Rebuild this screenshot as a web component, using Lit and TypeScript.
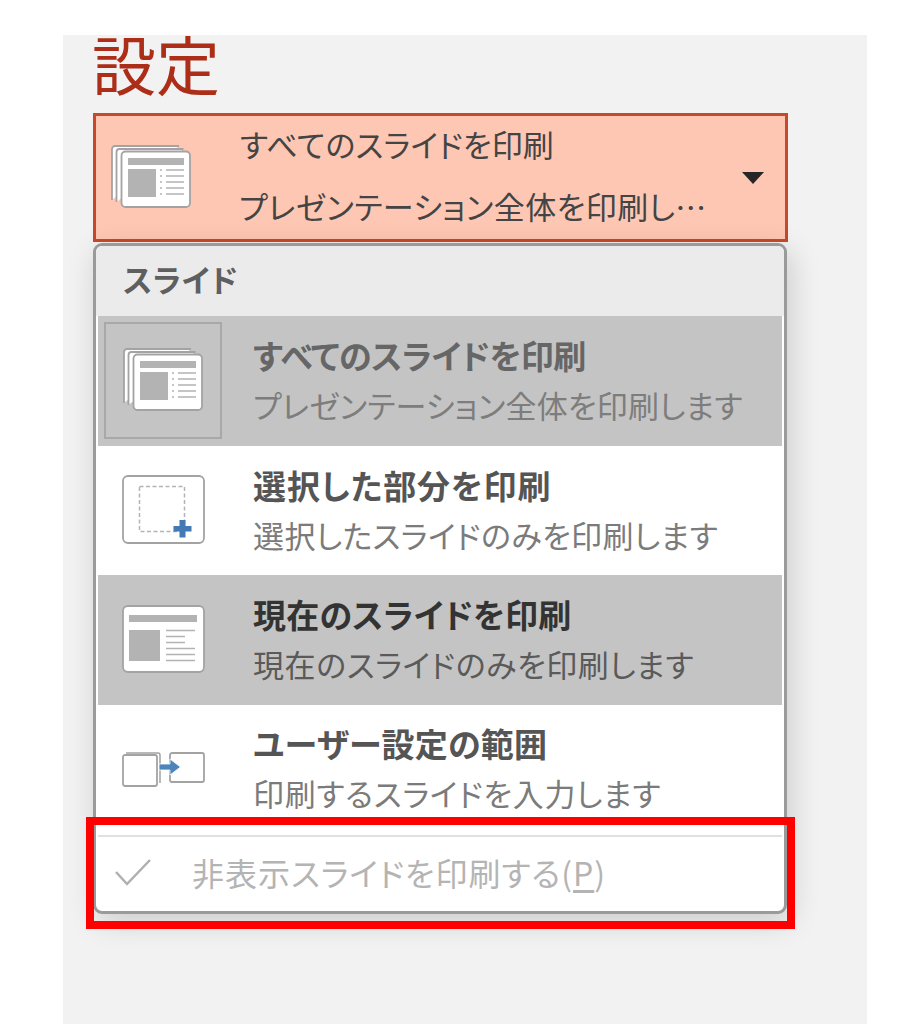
import { LitElement, html, css } from "lit";
import { customElement } from "lit/decorators.js";

const stackIcon = html`<svg class="ic stack" width="80" height="64" viewBox="0 0 80 64">
  <path d="M1 56V5a3 3 0 0 1 3-3h64" fill="#fff" stroke="#a3a3a3" stroke-width="1.800"/>
  <path d="M5.500 58V8a3 3 0 0 1 3-3h64" fill="#fff" stroke="#a3a3a3" stroke-width="1.800"/>
  <rect x="10.500" y="7.500" width="68.500" height="55.500" rx="4" fill="#fff" stroke="#a3a3a3" stroke-width="1.800"/>
  <rect x="17" y="14" width="56" height="7" fill="#b3b3b3"/>
  <rect x="17" y="25" width="28" height="28" fill="#b3b3b3"/>
  <g stroke="#b3b3b3" stroke-width="1.500">
    <path d="M49 26h2M49 32h2M49 38h2M49 44h2M49 50h2"/>
    <path d="M55 26h18M55 32h18M55 38h18M55 44h18M55 50h18"/>
  </g>
</svg>`;

const selectionIcon = html`<svg class="ic" width="84" height="70" viewBox="0 0 84 70">
  <rect x="1" y="1" width="81" height="67" rx="5" fill="#fff" stroke="#a3a3a3" stroke-width="1.800"/>
  <rect x="17.500" y="11.500" width="45" height="45" fill="none" stroke="#b3b3b3" stroke-width="1.500" stroke-dasharray="4 2.500"/>
  <path d="M57.500 45h6v6h6v5.500h-6v6h-6v-6h-6v-5.500h6z" fill="#4379b4"/>
</svg>`;

const slideIcon = html`<svg class="ic" width="84" height="70" viewBox="0 0 84 70">
  <rect x="1" y="1" width="81" height="66" rx="5" fill="#fff" stroke="#a3a3a3" stroke-width="1.800"/>
  <rect x="7" y="10" width="68" height="7" fill="#b3b3b3"/>
  <rect x="7" y="25" width="31" height="31" fill="#b3b3b3"/>
  <path d="M44 25.500h29M44 31.500h19M44 37.500h19M44 43.500h29M44 49.500h29M44 55.500h29" stroke="#b3b3b3" stroke-width="1.500"/>
</svg>`;

const rangeIcon = html`<svg class="ic range" width="84" height="36" viewBox="0 0 84 36">
  <path d="M4 1h32a2 2 0 0 1 2 2v28" fill="none" stroke="#a3a3a3" stroke-width="1.500"/>
  <rect x="1" y="3" width="34" height="31" rx="2" fill="#fff" stroke="#a3a3a3" stroke-width="1.800"/>
  <rect x="48" y="1" width="34" height="29" rx="2" fill="#fff" stroke="#a3a3a3" stroke-width="1.800"/>
  <path d="M37 12h11v-5l10.500 8-10.500 8v-5h-11z" fill="#4d84bb" stroke="#fff" stroke-width="0.800"/>
</svg>`;

const rows = [
  { icon: stackIcon, title: "すべてのスライドを印刷", sub: "プレゼンテーション全体を印刷します", cls: "on dim boxed", tls: -0.4, sls: 0.2 },
  { icon: selectionIcon, title: "選択した部分を印刷", sub: "選択したスライドのみを印刷します", cls: "mid", tls: 0.9, sls: 0.45 },
  { icon: slideIcon, title: "現在のスライドを印刷", sub: "現在のスライドのみを印刷します", cls: "on", tls: 0.25, sls: 0.6 },
  { icon: rangeIcon, title: "ユーザー設定の範囲", sub: "印刷するスライドを入力します", cls: "mid last", tls: 0.2, sls: 0.75 },
];

@customElement("app-root")
export class AppRoot extends LitElement {
  static styles = css`
    :host {
      display: block;
      height: 1024px;
      position: relative;
      overflow: hidden;
      background: #fff;
      font-family: "Noto Sans CJK JP", "Noto Sans", sans-serif;
      font-feature-settings: "palt";
    }
    .panel {
      box-sizing: border-box;
      width: 804px;
      height: 989px;
      margin: 35px 0 0 63px;
      padding-left: 30px;
      background: #f2f2f2;
    }
    h1 {
      margin: 0 0 0 -1px;
      height: 78px;
      font-size: 64px;
      line-height: 55px;
      font-weight: 400;
      color: #ac2d18;
      font-feature-settings: normal;
    }
    .select {
      box-sizing: border-box;
      width: 695px;
      height: 129px;
      background: #fec7b4;
      border: 3px solid #c8482b;
      display: flex;
      align-items: center;
      padding-left: 15px;
    }
    .select .stack {
      flex: none;
      margin-bottom: 4px;
    }
    .select .txt {
      margin-left: 49px;
      flex: 1;
      color: #444;
      display: flex;
      flex-direction: column;
      gap: 18px;
      line-height: 44px;
      font-size: 31px;
      padding-bottom: 6px;
    }
    .select .l1 {
      letter-spacing: 0.2px;
    }
    .select .l2 {
      margin-left: -1px;
      letter-spacing: 0.45px;
    }
    .caret {
      flex: none;
      margin: 0 21px 0 0;
      width: 0;
      height: 0;
      border-left: 11px solid transparent;
      border-right: 11px solid transparent;
      border-top: 12px solid #262626;
    }
    .menu {
      box-sizing: border-box;
      width: 694px;
      height: 671px;
      margin-top: 1px;
      background: #fff;
      border: 3px solid #9a9a9a;
      border-radius: 9px;
      padding: 0 2px;
      box-shadow: 4px 8px 30px rgba(0, 0, 0, 0.16);
      display: flex;
      flex-direction: column;
    }
    .head {
      margin: 0 -2px;
      box-sizing: border-box;
      height: 70px;
      padding: 9px 0 0 27px;
      background: #ebebeb;
      border-radius: 6px 6px 0 0;
      font-size: 31px;
      line-height: 48px;
      font-weight: 700;
      letter-spacing: 0.7px;
      color: #5f5f5f;
    }
    .row {
      height: 129.500px;
      flex: none;
      display: flex;
      align-items: center;
      position: relative;
      color: #444;
    }
    .row.on {
      background: #c4c4c4;
    }
    .row.last {
      height: 125px;
    }
    .boxed .iconbox {
      position: absolute;
      left: 6px;
      top: 6px;
      width: 118px;
      height: 117px;
      box-sizing: border-box;
      border: 2px solid #a8a8a8;
    }
    .icon-cell {
      flex: none;
      width: 156px;
      display: flex;
      justify-content: center;
      position: relative;
    }
    .ic {
      display: block;
    }
    .row .ic {
      margin-left: -24px;
    }
    .row .ic.range {
      margin-top: 5px;
    }
    .boxed .ic {
      margin-left: -26px;
      margin-top: -4px;
    }
    .row .text {
      display: flex;
      flex-direction: column;
      gap: 6px;
      line-height: 44px;
      margin-left: -1px;
      padding-bottom: 1px;
    }
    .row.last .text {
      padding: 1px 0 0;
    }
    .row .t {
      font-size: 33px;
      font-weight: 700;
      color: #333;
    }
    .row .s {
      font-size: 31px;
      color: #5a5a5a;
    }
    .row.mid .t {
      color: #555;
    }
    .row.mid .s {
      color: #7b7b7b;
    }
    .row.dim .t {
      color: #666;
    }
    .row.dim .s {
      color: #7d7d7d;
    }
    .sep {
      height: 2px;
      flex: none;
      margin-top: 5px;
      background: #e1e1e1;
    }
    .check {
      flex: 1;
      display: flex;
      align-items: center;
      color: #b4b4b4;
      font-size: 32px;
      letter-spacing: 1px;
      padding-bottom: 4px;
    }
    .check svg {
      flex: none;
      margin-left: 17px;
      margin-right: 41px;
    }
    .check u {
      text-underline-offset: 4px;
    }
    .mark {
      position: absolute;
      left: 86px;
      top: 817px;
      width: 709px;
      height: 112px;
      box-sizing: border-box;
      border: 8px solid #fe0000;
      pointer-events: none;
    }
  `;

  render() {
    return html`
      <div class="panel">
        <h1>設定</h1>
        <div class="select">
          ${stackIcon}
          <div class="txt">
            <span class="l1">すべてのスライドを印刷</span>
            <span class="l2">プレゼンテーション全体を印刷し…</span>
          </div>
          <span class="caret"></span>
        </div>
        <div class="menu">
          <div class="head">スライド</div>
          ${rows.map(
            (r) => html`
              <div class="row ${r.cls}">
                ${r.cls.includes("boxed") ? html`<span class="iconbox"></span>` : ""}
                <div class="icon-cell">${r.icon}</div>
                <div class="text">
                  <span class="t" style="letter-spacing:${r.tls}px">${r.title}</span>
                  <span class="s" style="letter-spacing:${r.sls}px">${r.sub}</span>
                </div>
              </div>
            `
          )}
          <div class="sep"></div>
          <div class="check">
            <svg width="36" height="28" viewBox="0 0 36 28">
              <path d="M1 14l11 12L35 2" fill="none" stroke="#b0b0b0" stroke-width="2.500"/>
            </svg>
            <span>非表示スライドを印刷する(<u>P</u>)</span>
          </div>
        </div>
      </div>
      <div class="mark"></div>
    `;
  }
}
